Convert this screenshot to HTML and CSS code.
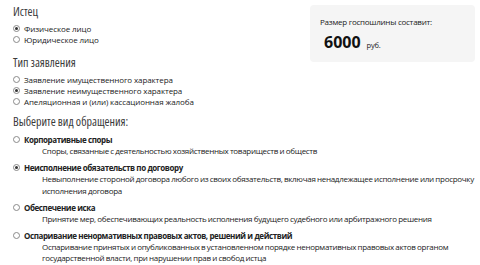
FILE: index.html
```html
<!DOCTYPE html>
<html lang="ru">
<head>
<meta charset="utf-8">
<link rel="stylesheet" href="styles.css">
</head>
<body>
<div class="page">
  <div class="top">
    <div class="left">
      <div class="group">
        <div class="heading">Истец</div>
        <label class="opt"><span class="radio on"></span>Физическое лицо</label>
        <label class="opt"><span class="radio"></span>Юридическое лицо</label>
      </div>
      <div class="group">
        <div class="heading">Тип заявления</div>
        <label class="opt"><span class="radio"></span>Заявление имущественного характера</label>
        <label class="opt"><span class="radio on"></span>Заявление неимущественного характера</label>
        <label class="opt"><span class="radio"></span>Апеляционная и (или) кассационная жалоба</label>
      </div>
    </div>
    <div class="fee">
      <div class="fee-label">Размер госпошлины составит:</div>
      <div class="fee-value"><span class="sum">6000</span><span class="cur">руб.</span></div>
    </div>
  </div>
  <div class="heading kinds">Выберите вид обращения:</div>
  <div class="kind">
    <div class="kind-title"><span class="radio"></span>Корпоративные споры</div>
    <div class="kind-desc">Споры, связанные с деятельностью хозяйственных товариществ и обществ</div>
  </div>
  <div class="kind">
    <div class="kind-title"><span class="radio on"></span>Неисполнение обязательств по договору</div>
    <div class="kind-desc">Невыполнение стороной договора любого из своих обязательств, включая ненадлежащее исполнение или просрочку исполнения договора</div>
  </div>
  <div class="kind">
    <div class="kind-title"><span class="radio"></span>Обеспечение иска</div>
    <div class="kind-desc">Принятие мер, обеспечивающих реальность исполнения будущего судебного или арбитражного решения</div>
  </div>
  <div class="kind">
    <div class="kind-title"><span class="radio"></span>Оспаривание ненормативных правовых актов, решений и действий</div>
    <div class="kind-desc">Оспаривание принятых и опубликованных в установленном порядке ненормативных правовых актов органом государственной власти, при нарушении прав и свобод истца</div>
  </div>
</div>
</body>
</html>
```

FILE: styles.css
```css
html, body {
  margin: 0;
  padding: 0;
  background: #fff;
}
body {
  font-family: "Open Sans", "Noto Sans", sans-serif;
  font-size: 8px;
  letter-spacing: -0.25px;
  color: #222;
}
.page {
  padding: 4px 4px 0 13px;
}
.top {
  display: flex;
  justify-content: space-between;
  align-items: flex-start;
}
.group {
  margin-bottom: 10px;
}
.group:last-child {
  margin-bottom: 5px;
}
.heading {
  font-stretch: 75%;
  font-size: 12px;
  letter-spacing: 0;
  color: #3a3a3a;
  line-height: 16px;
  margin-bottom: 3px;
}
.opt {
  display: flex;
  align-items: center;
  line-height: 11px;
  height: 11px;
  letter-spacing: -0.1px;
}
.radio {
  display: inline-block;
  box-sizing: border-box;
  width: 7px;
  height: 7px;
  border: 1px solid #8a8a8a;
  border-radius: 50%;
  margin: 0 4px 0 0;
  flex: none;
  position: relative;
  background: #fff;
}
.radio.on::after {
  content: "";
  position: absolute;
  left: 1px;
  top: 1px;
  width: 3px;
  height: 3px;
  border-radius: 50%;
  background: #333;
}
.fee {
  width: 165px;
  height: 57px;
  margin-top: 1px;
  margin-right: 1px;
  background: #f5f5f5;
  border-radius: 4px;
  box-sizing: border-box;
  padding: 11px 10px 0 10px;
}
.fee-label {
  color: #222;
  line-height: 11px;
}
.fee-value {
  margin-top: 4px;
  padding-left: 4px;
  display: flex;
  align-items: baseline;
}
.sum {
  font-size: 16px;
  font-weight: bold;
  letter-spacing: 0;
  color: #111;
}
.cur {
  font-size: 7.5px;
  margin-left: 6px;
}
.kinds {
  margin-top: 2px;
  margin-bottom: 4px;
}
.kind {
  margin-bottom: 5.5px;
}
.kind-title {
  display: flex;
  align-items: center;
  font-weight: bold;
  letter-spacing: -0.4px;
  line-height: 11px;
}
.kind-desc {
  padding-left: 29px;
  line-height: 11.5px;
  letter-spacing: -0.3px;
  word-spacing: -0.3px;
}
```
